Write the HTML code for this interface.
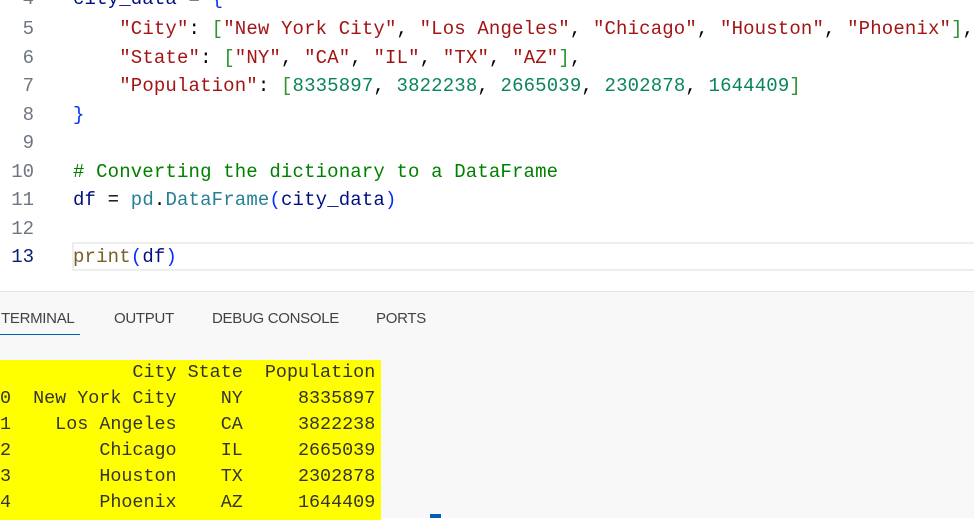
<!DOCTYPE html>
<html><head><style>
html,body{margin:0;padding:0;width:974px;height:517px;overflow:hidden;background:#fff;}
.ed{position:absolute;left:0;top:0;width:974px;height:291px;background:#fff;}
.ln{position:absolute;left:0;width:34px;text-align:right;font:19px "Liberation Mono",monospace;color:#6e7681;}
.cl{position:absolute;left:73px;font:19px "Liberation Mono",monospace;white-space:pre;color:#001080;letter-spacing:0.15px;}
.s{color:#a31515}.n{color:#098658}.b1{color:#0431fa}.b2{color:#319331}.c{color:#008000}.f{color:#795e26}.t{color:#267f99}.k{color:#000}
.hl{position:absolute;left:72px;top:242px;width:910px;height:25px;border:2px solid #eeeeee;}
.panel{position:absolute;left:0;top:291px;width:974px;height:226px;background:#f8f8f8;border-top:1px solid #e5e5e5;}
.tab{position:absolute;top:18px;font:15px "Liberation Sans",sans-serif;color:#424242;letter-spacing:-0.3px;}
.term{position:absolute;left:0;top:68px;width:381px;height:160px;background:#ffff00;font:18.4px "Liberation Mono",monospace;white-space:pre;line-height:26px;color:#333;padding-top:0;}
</style></head><body>
<div class="ed">
<div class="hl"></div>
<div class="ln" style="top:-12px">4</div><div class="cl" style="top:-12px">city_data <span class="k">=</span> <span class="b1">{</span></div>
<div class="ln" style="top:18px">5</div><div class="cl" style="top:18px">    <span class="s">"City"</span><span class="k">:</span> <span class="b2">[</span><span class="s">"New York City"</span><span class="k">,</span> <span class="s">"Los Angeles"</span><span class="k">,</span> <span class="s">"Chicago"</span><span class="k">,</span> <span class="s">"Houston"</span><span class="k">,</span> <span class="s">"Phoenix"</span><span class="b2">]</span><span class="k">,</span></div>
<div class="ln" style="top:47px">6</div><div class="cl" style="top:47px">    <span class="s">"State"</span><span class="k">:</span> <span class="b2">[</span><span class="s">"NY"</span><span class="k">,</span> <span class="s">"CA"</span><span class="k">,</span> <span class="s">"IL"</span><span class="k">,</span> <span class="s">"TX"</span><span class="k">,</span> <span class="s">"AZ"</span><span class="b2">]</span><span class="k">,</span></div>
<div class="ln" style="top:75px">7</div><div class="cl" style="top:75px">    <span class="s">"Population"</span><span class="k">:</span> <span class="b2">[</span><span class="n">8335897</span><span class="k">,</span> <span class="n">3822238</span><span class="k">,</span> <span class="n">2665039</span><span class="k">,</span> <span class="n">2302878</span><span class="k">,</span> <span class="n">1644409</span><span class="b2">]</span></div>
<div class="ln" style="top:104px">8</div><div class="cl" style="top:104px"><span class="b1">}</span></div>
<div class="ln" style="top:132px">9</div>
<div class="ln" style="top:161px">10</div><div class="cl c" style="top:161px"># Converting the dictionary to a DataFrame</div>
<div class="ln" style="top:189px">11</div><div class="cl" style="top:189px">df <span class="k">=</span> <span class="t">pd</span><span class="k">.</span><span class="t">DataFrame</span><span class="b1">(</span>city_data<span class="b1">)</span></div>
<div class="ln" style="top:218px">12</div>
<div class="ln" style="top:246px;color:#0b216f">13</div><div class="cl" style="top:246px"><span class="f">print</span><span class="b1">(</span>df<span class="b1">)</span></div>
</div>
<div class="panel">
<div class="tab" style="left:1px">TERMINAL</div>
<div style="position:absolute;left:0;top:42px;width:80px;height:1px;background:#005fb8"></div>
<div class="tab" style="left:114px">OUTPUT</div>
<div class="tab" style="left:212px">DEBUG CONSOLE</div>
<div class="tab" style="left:376px">PORTS</div>
<div class="term">            City State  Population
0  New York City    NY     8335897
1    Los Angeles    CA     3822238
2        Chicago    IL     2665039
3        Houston    TX     2302878
4        Phoenix    AZ     1644409</div>
<div style="position:absolute;left:430px;top:222px;width:11px;height:4px;background:#005fb8"></div>
</div>
</body></html>
